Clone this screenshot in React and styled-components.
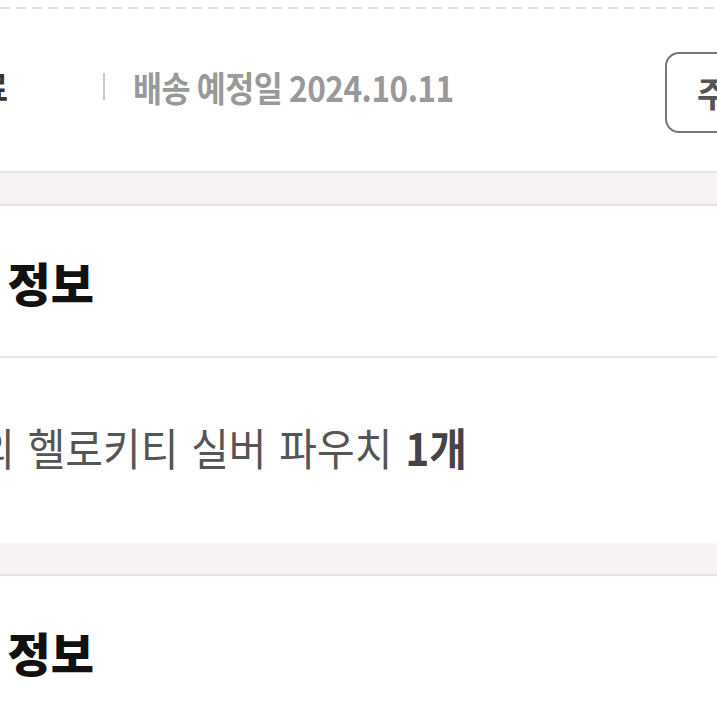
import React from 'react';
import styled, {createGlobalStyle} from 'styled-components';

const GlobalStyle = createGlobalStyle`
  html, body {
    margin: 0;
    padding: 0;
    background: #fff;
    overflow: hidden;
  }
  body {
    font-family: "Noto Sans CJK KR", "Noto Sans", sans-serif;
  }
`;

const Page = styled.div`
  width: 717px;
  overflow: hidden;
`;

// dotted cut line left over from the card above
const DashedRule = styled.div`
  height: 2px;
  margin-top: 7px;
  background: repeating-linear-gradient(to right, #dedede 0 10px, transparent 10px 16px);
`;

const StatusBar = styled.div`
  box-sizing: border-box;
  display: flex;
  align-items: center;
  height: 162px;
  padding-bottom: 7px;
`;

const StatusLabel = styled.div`
  flex-shrink: 0;
  width: 160px;
  margin-left: -152px;
  text-align: right;
  font-size: 34px;
  font-weight: 700;
  color: #333;
  white-space: nowrap;
  transform: scaleX(0.86);
  transform-origin: right center;
`;

const Divider = styled.span`
  flex-shrink: 0;
  width: 2px;
  height: 27px;
  margin-left: 95px;
  background: #c9c9c9;
`;

const DateText = styled.div`
  flex-shrink: 0;
  margin-left: 28px;
  font-size: 35px;
  font-weight: 700;
  color: #999;
  white-space: nowrap;
  letter-spacing: -0.5px;
  transform: scaleX(0.9);
  transform-origin: left center;
`;

const DetailButton = styled.button`
  flex-shrink: 0;
  box-sizing: border-box;
  width: 180px;
  height: 81px;
  margin: 11px -128px 0 auto;
  padding: 0 0 0 30px;
  border: 2px solid #777;
  border-radius: 14px;
  background: #fff;
  text-align: left;
  font-family: inherit;
  font-size: 34px;
  font-weight: 700;
  color: #555;
  white-space: nowrap;
`;

const Band = styled.div`
  height: 31px;
  background: #f6f2f5;
  border-top: ${p => (p.$topLine ? '2px solid #e6e6e6' : 'none')};
  border-bottom: 2px solid #e3e3e3;
`;

const SectionHeader = styled.div`
  display: flex;
  align-items: center;
  height: 150px;
  border-bottom: ${p => (p.$line ? '2px solid #e6e6e6' : 'none')};
`;

const SectionTitle = styled.h2`
  flex-shrink: 0;
  width: 320px;
  margin: 0 0 0 -226px;
  text-align: right;
  font-size: 47px;
  font-weight: 900;
  color: #111;
  white-space: nowrap;
`;

const ItemRow = styled.div`
  box-sizing: border-box;
  display: flex;
  align-items: center;
  height: 185px;
  padding-bottom: 8px;
`;

const ItemText = styled.p`
  flex-shrink: 0;
  width: 700px;
  margin: 0 0 0 -233px;
  text-align: right;
  font-size: 44px;
  font-weight: 400;
  color: #555;
  white-space: nowrap;
  word-spacing: 4px;
  transform: scaleX(0.93);
  transform-origin: right center;

  & b {
    font-weight: 700;
    color: #444;
  }
`;

export default function App() {
  return (
    <Page>
      <GlobalStyle />
      <DashedRule />
      <StatusBar>
        <StatusLabel>결제완료</StatusLabel>
        <Divider />
        <DateText>배송 예정일 2024.10.11</DateText>
        <DetailButton>주문상세</DetailButton>
      </StatusBar>
      <Band $topLine />
      <SectionHeader $line>
        <SectionTitle>주문 상품 정보</SectionTitle>
      </SectionHeader>
      <ItemRow>
        <ItemText>
          산리오의 헬로키티 실버 파우치 <b>1개</b>
        </ItemText>
      </ItemRow>
      <Band />
      <SectionHeader>
        <SectionTitle>배송지 정보</SectionTitle>
      </SectionHeader>
    </Page>
  );
}
